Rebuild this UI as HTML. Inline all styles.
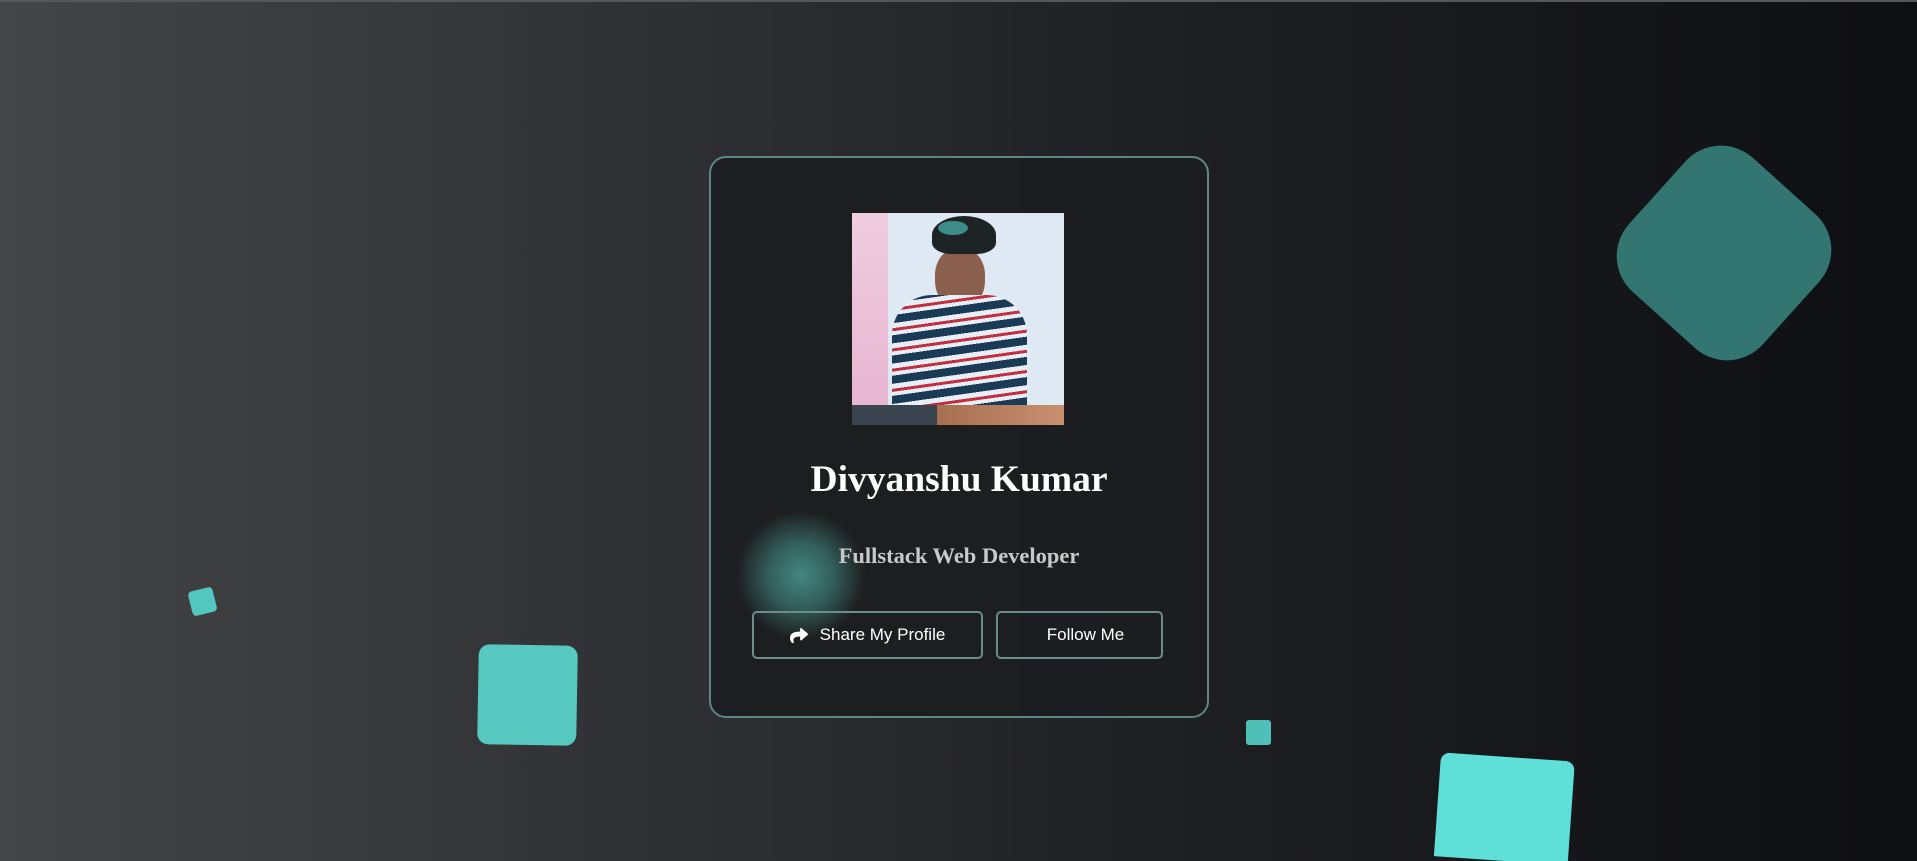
<!DOCTYPE html>
<html><head><meta charset="utf-8"><style>
html,body{margin:0;padding:0;width:1917px;height:861px;overflow:hidden}
#w{position:relative;width:1917px;height:861px;overflow:hidden;background:linear-gradient(90deg,#444547 0%,#2f3033 35%,#1f2023 60%,#0e0f12 100%);font-family:"Liberation Sans",sans-serif}
.top{position:absolute;left:0;top:0;width:100%;height:2px;background:#55575a}
.sh{position:absolute}
.card{position:absolute;left:709px;top:156px;width:496px;height:558px;border:2px solid #5f8781;border-radius:17px;background:rgba(28,29,31,0.92)}
.photo{position:absolute;left:852px;top:213px;width:212px;height:212px;overflow:hidden;background:#dfe9f3}
.name{position:absolute;left:709px;width:500px;top:458px;text-align:center;font-family:"Liberation Serif",serif;font-weight:bold;font-size:37.5px;color:#fff}
.sub{position:absolute;left:709px;width:500px;top:543px;text-align:center;font-family:"Liberation Serif",serif;font-weight:bold;font-size:22.5px;color:#c9c9c9}
.btn{position:absolute;top:611px;height:44px;border:2px solid #6a8e89;border-radius:5px;color:#fff;font-size:17px;display:flex;align-items:center;justify-content:center}
.glow{position:absolute;left:736px;top:510px;width:130px;height:130px;border-radius:50%;background:radial-gradient(circle,rgba(66,135,127,1) 0%,rgba(60,122,115,0.7) 35%,rgba(40,80,76,0) 70%)}
</style></head><body><div id="w">
<div class="top"></div>
<div class="sh" style="left:1634px;top:163px;width:180px;height:180px;background:#337570;border-radius:48px;transform:rotate(42deg)"></div>
<div class="sh" style="left:190px;top:589px;width:25px;height:25px;background:#52c7bf;border-radius:4px;transform:rotate(-14deg)"></div>
<div class="sh" style="left:478px;top:645px;width:99px;height:100px;background:#58c9c1;border-radius:11px;transform:rotate(1deg)"></div>
<div class="sh" style="left:1246px;top:720px;width:25px;height:25px;background:#4fc0b8;border-radius:3px"></div>
<div class="sh" style="left:1441px;top:757px;width:134px;height:104px;background:#5ee0d8;border-radius:9px 9px 0 0;transform:rotate(4deg);transform-origin:50% 0"></div>
<div class="card"></div>
<div class="glow"></div>
<div class="photo">
 <div style="position:absolute;left:0;top:0;width:36px;height:212px;background:linear-gradient(180deg,#f0cde0,#e6b3cf)"></div>
 <div style="position:absolute;left:83px;top:35px;width:50px;height:60px;border-radius:45%;background:#8a5f4e"></div>
 <div style="position:absolute;left:80px;top:3px;width:64px;height:38px;border-radius:50% 50% 30% 30%;background:#1e2326"></div>
 <div style="position:absolute;left:86px;top:8px;width:30px;height:14px;border-radius:50%;background:#3d8c8a"></div>
 <div style="position:absolute;left:40px;top:82px;width:135px;height:115px;border-radius:40px 40px 0 0;background:repeating-linear-gradient(172deg,#1a3a55 0 8px,#e8eef5 8px 13px,#c23040 13px 16px,#e8eef5 16px 20px)"></div>
 <div style="position:absolute;left:0;top:192px;width:212px;height:20px;background:linear-gradient(90deg,#3a4550 0 40%,#a66f50 40%,#c99070)"></div>
</div>
<div class="name">Divyanshu Kumar</div>
<div class="sub">Fullstack Web Developer</div>
<div class="btn" style="left:752px;width:227px"><svg width="18" height="16" viewBox="0 0 512 448" style="margin-right:12px"><path fill="#fff" d="M503 183L327 31c-15-13-39-3-39 18v80C127 131 0 163 0 315c0 61 39 122 83 154 14 10 33-3 28-19C66 305 132 268 288 266v88c0 21 24 31 39 18l176-152c11-10 11-28 0-37z"/></svg>Share My Profile</div>
<div class="btn" style="left:996px;padding-left:12px;box-sizing:content-box;width:151px">Follow Me</div>
</div></body></html>
